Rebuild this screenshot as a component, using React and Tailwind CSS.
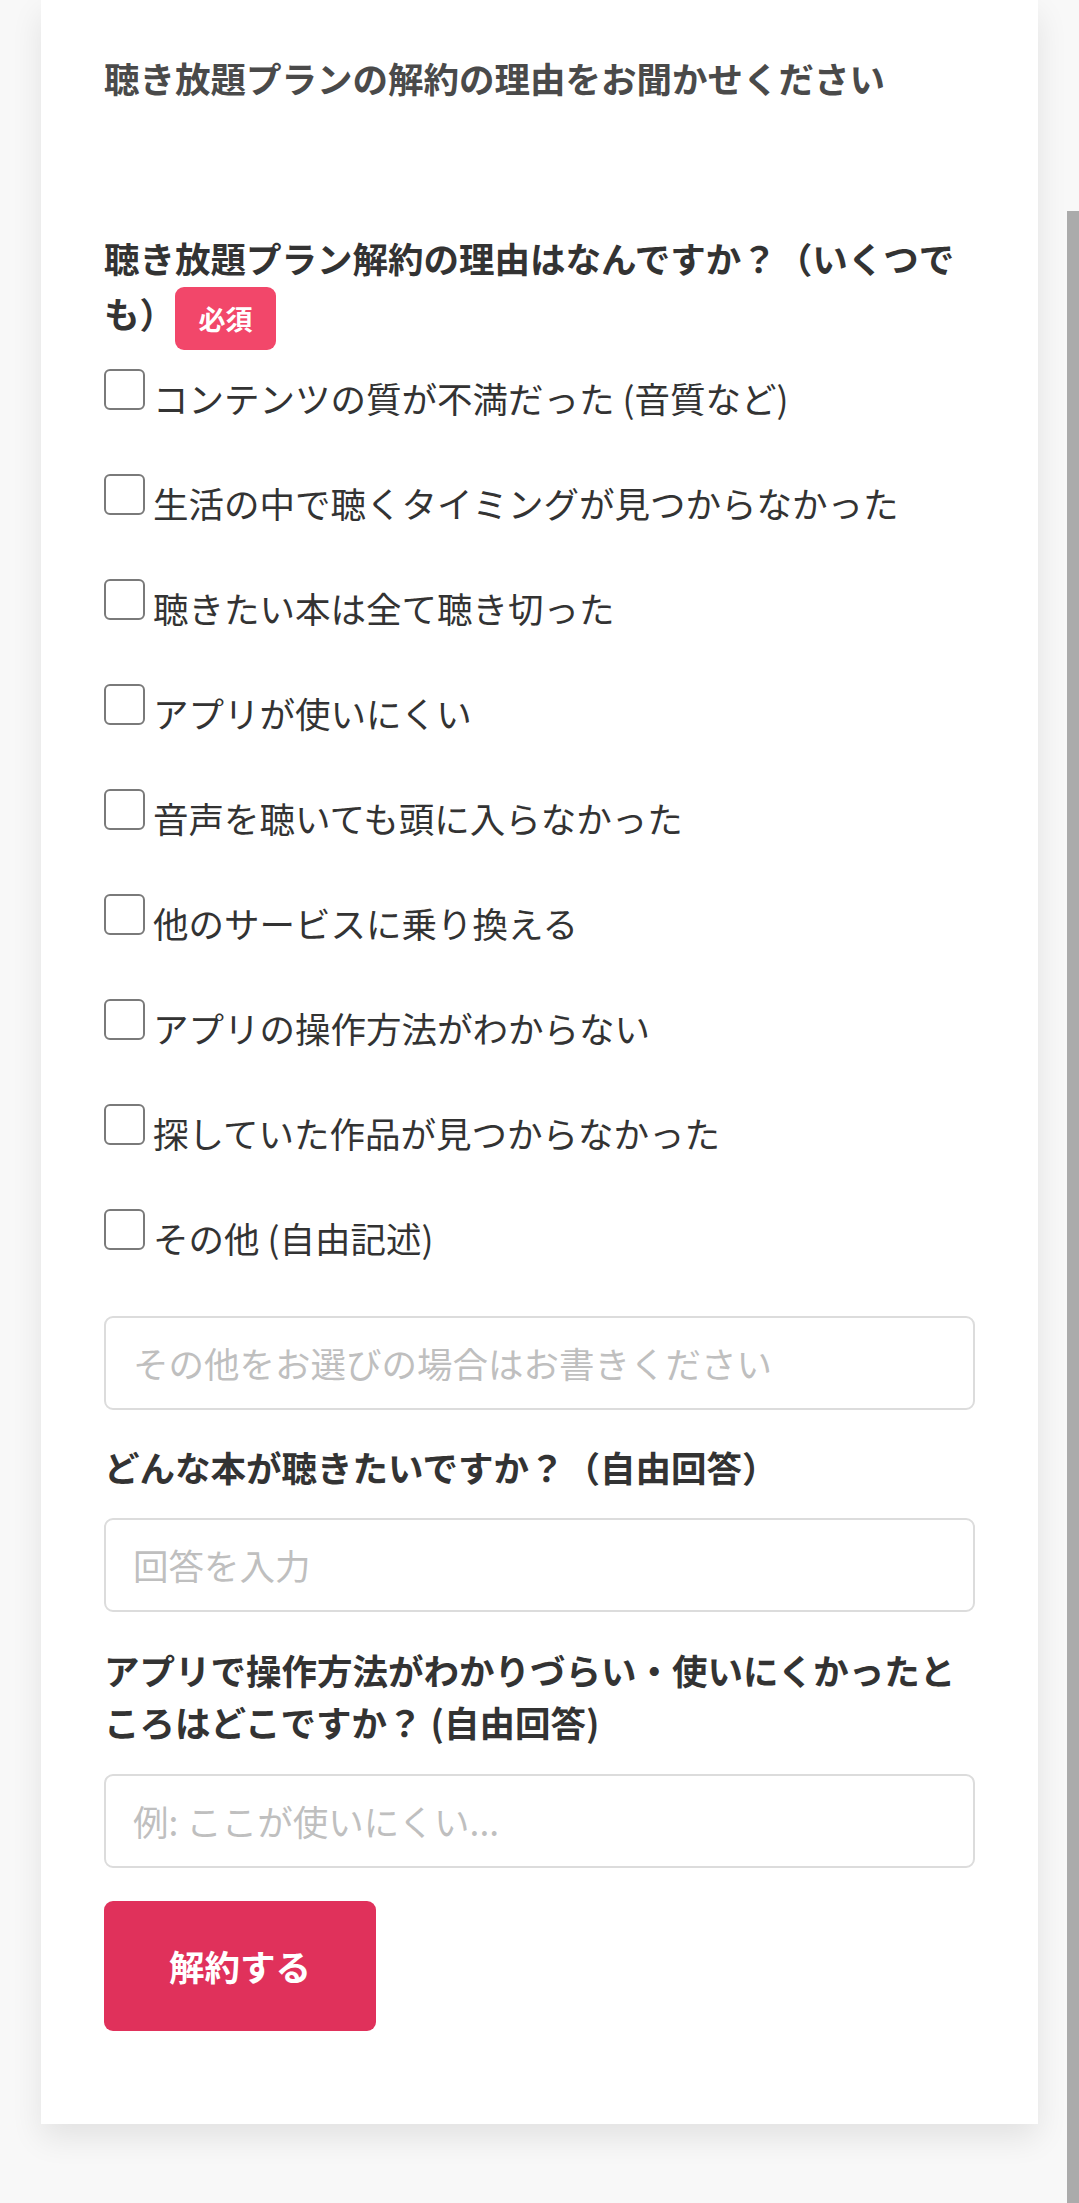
const reasons = [
  "コンテンツの質が不満だった (音質など)",
  "生活の中で聴くタイミングが見つからなかった",
  "聴きたい本は全て聴き切った",
  "アプリが使いにくい",
  "音声を聴いても頭に入らなかった",
  "他のサービスに乗り換える",
  "アプリの操作方法がわからない",
  "探していた作品が見つからなかった",
  "その他 (自由記述)",
];

function TextField({ placeholder }) {
  return (
    <input
      type="text"
      placeholder={placeholder}
      className="block w-full h-[94px] rounded-[9px] border-2 border-[#dcdcdc] bg-white pl-[27px] pr-4 text-[35.5px] text-[#333] placeholder:text-[#bfbfbf] outline-none"
    />
  );
}

export default function App() {
  return (
    <div className="flex h-[2203px] w-full overflow-hidden bg-[#f8f8f8] font-['Noto_Sans_CJK_JP','Noto_Sans',sans-serif]">
      <div className="flex-1">
        <div className="ml-[41px] w-[997px] bg-white px-[63px] pt-[52px] pb-[93px] shadow-[0_14px_30px_rgba(0,0,0,0.09)]">
          <h1 className="text-[35.5px] font-bold leading-[52px] text-[#4a4a4a]">
            聴き放題プランの解約の理由をお聞かせください
          </h1>

          <div className="mt-[126px] text-[35.5px] font-bold leading-[55px] text-[#333]">
            聴き放題プラン解約の理由はなんですか？（いくつでも）
            <span className="inline-block h-[63px] w-[101px] rounded-[9px] bg-[#f2476a] text-center align-middle text-[27px] leading-[63px] text-white">
              必須
            </span>
          </div>

          <div className="mt-[19px] flex flex-col gap-[50px]">
            {reasons.map((r) => (
              <label key={r} className="flex items-start gap-[8px]">
                <input
                  type="checkbox"
                  className="h-[41px] w-[41px] shrink-0 appearance-none rounded-[6px] border-2 border-[#7a7a7a] bg-white"
                />
                <span className="pt-[3px] text-[35.5px] leading-[52px] text-[#333]">{r}</span>
              </label>
            ))}
          </div>

          <div className="mt-[52px]">
            <TextField placeholder="その他をお選びの場合はお書きください" />
          </div>

          <div className="mt-[31px] text-[35.5px] font-bold leading-[52px] text-[#333]">
            どんな本が聴きたいですか？（自由回答）
          </div>
          <div className="mt-[25px]">
            <TextField placeholder="回答を入力" />
          </div>

          <div className="mt-[32px] text-[35.5px] font-bold leading-[52px] text-[#333]">
            アプリで操作方法がわかりづらい・使いにくかったところはどこですか？ (自由回答)
          </div>
          <div className="mt-[26px]">
            <TextField placeholder="例: ここが使いにくい..." />
          </div>

          <button
            type="button"
            className="mt-[33px] h-[130px] w-[272px] rounded-[9px] bg-[#e0315b] text-[35.5px] font-bold text-white"
          >
            解約する
          </button>
        </div>
      </div>
      <div className="w-[12px] shrink-0 pt-[211px]">
        <div className="h-full w-full bg-[#ababab]" />
      </div>
    </div>
  );
}
